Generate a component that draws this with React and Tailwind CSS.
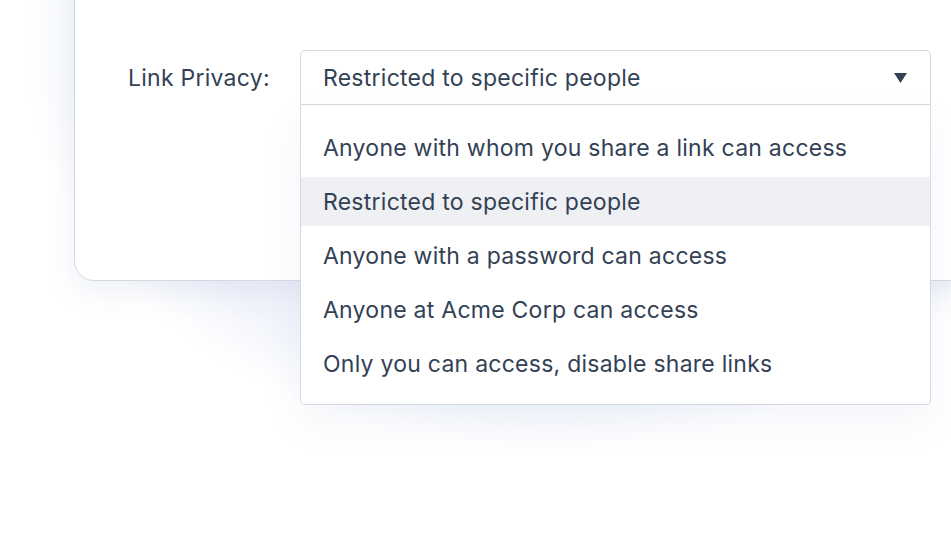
const OPTIONS = [
  'Anyone with whom you share a link can access',
  'Restricted to specific people',
  'Anyone with a password can access',
  'Anyone at Acme Corp can access',
  'Only you can access, disable share links',
]

export default function App() {
  const selected = 'Restricted to specific people'

  return (
    <div className="min-h-screen overflow-hidden bg-white bg-[radial-gradient(ellipse_525px_405px_at_550px_45px,#eceff8_0%,#f1f4fb_85%,#ffffff_100%)] pl-[74px] font-['Inter',sans-serif] text-[23px] leading-[28px] tracking-[0.25px] text-[#334155]">
      {/* Card */}
      <div className="mt-[-60px] h-[341px] w-[940px] rounded-[20px] border border-[#d3d9e3] bg-white pl-[53px] pt-[109px] shadow-[0_10px_30px_rgba(90,110,170,0.10)]">
        <div className="flex items-start">
          <div className="flex h-[55px] w-[172px] items-center">Link Privacy:</div>

          {/* Select */}
          <div className="relative w-[631px]">
            <div className="flex h-[55px] items-center justify-between rounded-t-[5px] border border-[#d5dae2] bg-white pl-[22px] pr-[23px]">
              <span>{selected}</span>
              <svg width="13" height="10" viewBox="0 0 13 10">
                <path d="M0 0h13L6.5 10z" fill="#334155" />
              </svg>
            </div>

            {/* Menu */}
            <ul className="absolute left-0 top-full flex w-full flex-col gap-[5px] rounded-b-[5px] border border-t-0 border-[#d5dae2] bg-white pb-[16px] pt-[18px] shadow-[0_16px_40px_rgba(90,110,170,0.07)]">
              {OPTIONS.map(opt => (
                <li
                  key={opt}
                  className={`flex h-[49px] items-center pl-[22px] ${opt === selected ? 'bg-[#eef0f3]' : ''}`}
                >
                  {opt}
                </li>
              ))}
            </ul>
          </div>
        </div>
      </div>
    </div>
  )
}
